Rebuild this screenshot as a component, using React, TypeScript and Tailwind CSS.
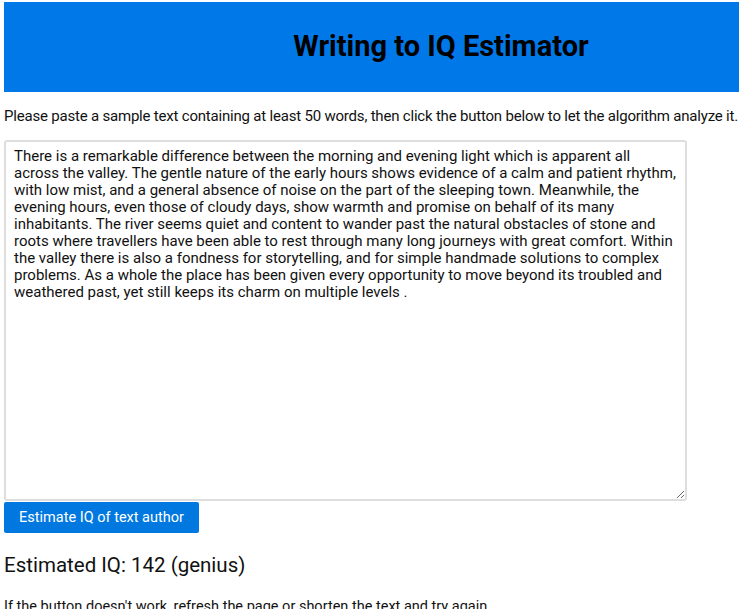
import { useState } from 'react';

const SAMPLE =
  "There is a remarkable difference between the morning and evening light which is apparent all across the valley. The gentle nature of the early hours shows evidence of a calm and patient rhythm, with low mist, and a general absence of noise on the part of the sleeping town. Meanwhile, the evening hours, even those of cloudy days, show warmth and promise on behalf of its many inhabitants. The river seems quiet and content to wander past the natural obstacles of stone and roots where travellers have been able to rest through many long journeys with great comfort. Within the valley there is also a fondness for storytelling, and for simple handmade solutions to complex problems. As a whole the place has been given every opportunity to move beyond its troubled and weathered past, yet still keeps its charm on multiple levels .";

export default function App() {
  const [text, setText] = useState(SAMPLE);

  return (
    <div className="min-h-screen overflow-hidden bg-white font-['Roboto','Liberation_Sans',sans-serif] text-[#111]">
      <div className="w-[874px] ml-1 mt-[2px] h-[90px] bg-[#0078e8] flex items-center justify-center">
        <h1 className="text-[29px] font-bold text-black">Writing to IQ Estimator</h1>
      </div>

      <p className="ml-1 mt-[15px] text-[15px] tracking-[-0.2px] whitespace-nowrap leading-[19px]">
        Please paste a sample text containing at least 50 words, then click the button below to let the algorithm analyze it.
      </p>

      <textarea
        value={text}
        onChange={(e) => setText(e.target.value)}
        className="block ml-1 mt-[14px] w-[683px] h-[361px] resize-y border-2 border-[#dedede] rounded-[3px] px-2 pt-[6px] pb-2 text-[15px] leading-[17px] outline-none"
      />

      <button className="block ml-1 mt-[1px] h-[31px] w-[195px] bg-[#0078e0] text-white text-[14.5px] rounded-[2px]">
        Estimate IQ of text author
      </button>

      <h2 className="ml-1 mt-[20px] text-[20.5px] leading-[25px]">Estimated IQ: 142 (genius)</h2>

      <p className="ml-1 mt-[20px] text-[14.5px] leading-[18px]">
        If the button doesn't work, refresh the page or shorten the text and try again.
      </p>
    </div>
  );
}
